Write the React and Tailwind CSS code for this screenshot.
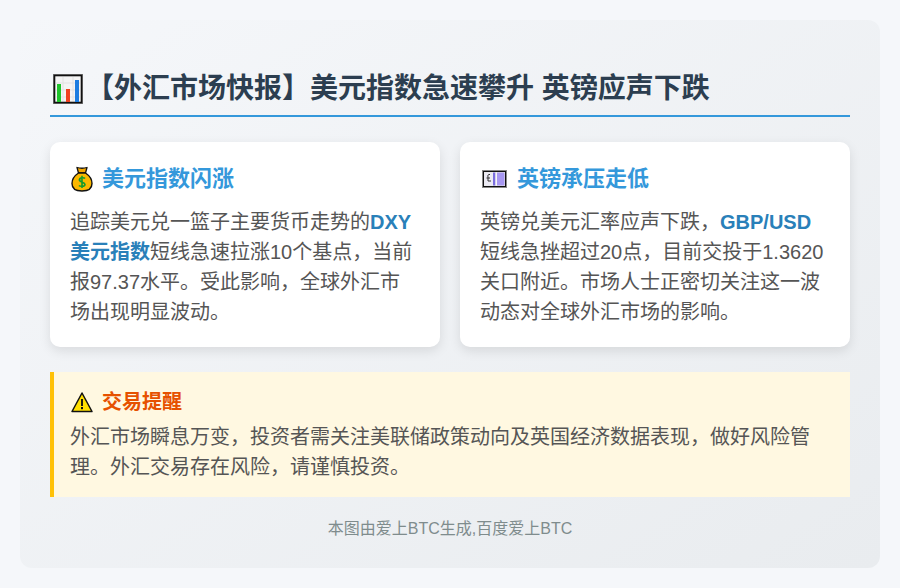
const FONT = "font-['Liberation_Sans','Noto_Sans_CJK_SC',sans-serif]";

const ChartIcon = () => (
  <svg width="30" height="30" viewBox="0 0 30 30" className="shrink-0">
    <rect x="0.5" y="0.5" width="29" height="29" fill="#f4f4f4" stroke="#777" />
    <rect x="1.5" y="1.5" width="27" height="27" fill="none" stroke="#111" strokeWidth="1.6" />
    <path d="M3 9h24M3 16h24M3 23h24M10 3v24M20 3v24" stroke="#e2e2e2" strokeWidth="1" />
    <rect x="4" y="10" width="4" height="18" fill="#1fc42c" />
    <rect x="13" y="15" width="4" height="13" fill="#f0401f" />
    <rect x="22" y="6" width="4" height="22" fill="#1c7ce0" />
  </svg>
);

const BagIcon = () => (
  <svg width="22" height="26" viewBox="0 0 22 26" className="shrink-0">
    <path d="M6 1.5 Q11 3 16 1.5 L14.5 7 H7.5 Z" fill="#f5a800" stroke="#111" strokeWidth="1.3" strokeLinejoin="round" />
    <path d="M7.5 7 C3 10 1 14 1 17.5 C1 22.5 5 25 11 25 C17 25 21 22.5 21 17.5 C21 14 19 10 14.5 7 Z" fill="#fbb800" stroke="#111" strokeWidth="1.4" />
    <path d="M14 12.5 C13.2 11.5 8.6 11.3 8.4 13.8 C8.2 16.5 14 15.8 14 18.4 C14 20.8 9 20.6 8 19.4 M11 9.8 V22" fill="none" stroke="#159a2c" strokeWidth="1.6" />
  </svg>
);

const NoteIcon = () => (
  <svg width="25" height="18" viewBox="0 0 25 18" className="shrink-0">
    <rect x="0.5" y="0.5" width="24" height="17" fill="#e8e8e8" stroke="#888" />
    <rect x="1.5" y="1.5" width="22" height="15" fill="none" stroke="#111" />
    <rect x="2.5" y="2.5" width="8.5" height="13" fill="#ecebf5" />
    <rect x="11" y="2.5" width="2.5" height="13" fill="#7a6ee0" />
    <rect x="13.5" y="2.5" width="1.5" height="13" fill="#f7f7f7" />
    <rect x="15" y="2.5" width="7.5" height="13" fill="#a797f2" />
    <path d="M8 4.5 C6 4 5.5 5.5 6 7 L6 11 H9 M4.5 8 H8" fill="none" stroke="#333" strokeWidth="1" />
  </svg>
);

const WarnIcon = () => (
  <svg width="22" height="22" viewBox="0 0 22 22" className="shrink-0">
    <path d="M11 2 L21 20.5 H1 Z" fill="#ffdf00" stroke="#111" strokeWidth="1.5" strokeLinejoin="round" />
    <path d="M11 8 V15" stroke="#111" strokeWidth="1.9" />
    <rect x="10" y="16" width="2" height="2.2" fill="#111" />
  </svg>
);

const Card = ({ icon, iconBox, title, children }) => (
  <div className="flex-1 bg-white rounded-[10px] px-5 py-5 shadow-[0_4px_12px_rgba(0,0,0,0.1)]">
    <h2 className="flex items-center gap-2 text-[22px] leading-[33px] font-bold text-[#3498db] mb-3">
      <span className={iconBox}>{icon}</span>
      {title}
    </h2>
    <p className="text-[20px] leading-[30px] text-[#555]">{children}</p>
  </div>
);

const App = () => {
  return (
    <div className={`min-h-[588px] bg-[#f5f7fa] p-5 ${FONT}`}>
      <div className="h-[548px] rounded-xl bg-gradient-to-br from-[#f5f7fa] to-[#e9ecef] px-[30px] pt-[30px]">
        <h1 className="mt-[18px] flex items-center gap-[3px] text-[28px] leading-[42px] font-bold text-[#2c3e50] border-b-2 border-[#3498db] pb-[5px] pl-[3px] mb-[25px]">
          <ChartIcon />
          <span>【外汇市场快报】美元指数急速攀升 英镑应声下跌</span>
        </h1>
        <div className="flex gap-5">
          <Card icon={<BagIcon />} iconBox="flex w-[24px] justify-center" title="美元指数闪涨">
            追踪美元兑一篮子主要货币走势的<strong className="text-[#2980b9]">DXY美元指数</strong>短线急速拉涨10个基点，当前报97.37水平。受此影响，全球外汇市场出现明显波动。
          </Card>
          <Card icon={<NoteIcon />} iconBox="flex w-[29px] justify-center" title="英镑承压走低">
            英镑兑美元汇率应声下跌，<strong className="text-[#2980b9]">GBP/USD</strong>短线急挫超过20点，目前交投于1.3620关口附近。市场人士正密切关注这一波动态对全球外汇市场的影响。
          </Card>
        </div>
        <div className="mt-[25px] bg-[#fff8e1] border-l-4 border-[#ffc107] px-4 py-[15px]">
          <h3 className="flex items-center gap-2 text-[20px] leading-[30px] font-bold text-[#e65100] mb-[5px]">
            <span className="flex w-[24px] justify-center">
              <WarnIcon />
            </span>
            交易提醒
          </h3>
          <p className="text-[20px] leading-[30px] text-[#555]">
            外汇市场瞬息万变，投资者需关注美联储政策动向及英国经济数据表现，做好风险管理。外汇交易存在风险，请谨慎投资。
          </p>
        </div>
        <p className="mt-5 text-center text-[16px] leading-[24px] text-[#7f8c8d]">本图由爱上BTC生成,百度爱上BTC</p>
      </div>
    </div>
  );
};

export default App;
